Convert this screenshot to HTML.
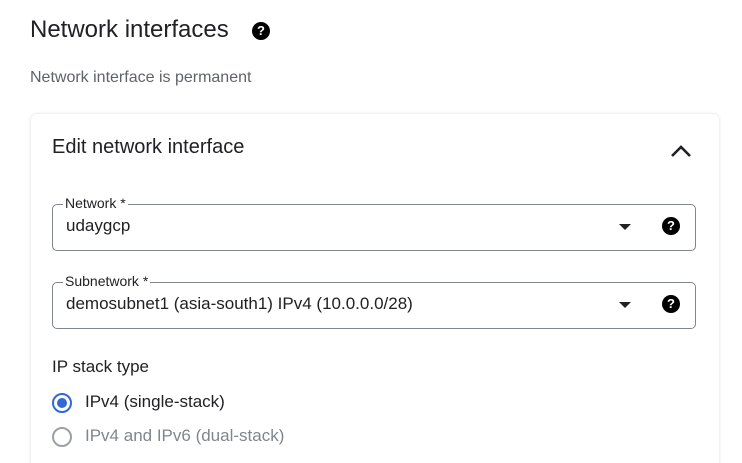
<!DOCTYPE html>
<html><head><style>
html,body{margin:0;width:742px;height:463px;overflow:hidden}
body{background:#fff;font-family:"Liberation Sans",sans-serif;position:relative;color:#202124}
.a{position:absolute;white-space:nowrap}
.card{position:absolute;left:31px;top:114px;width:688px;height:360px;border-radius:6px;box-shadow:0 0 3px rgba(0,0,0,.15);background:#fff}
.box{position:absolute;left:52px;width:642px;height:45px;border:1px solid #80868b;border-radius:5px}
.lbl{position:absolute;left:10px;top:-10px;background:#fff;padding:0 2px;font-size:14px;color:#202124}
.val{position:absolute;left:13px;top:11px;font-size:17px}
.tri{position:absolute;left:566px;top:19px;width:0;height:0;border-left:6px solid transparent;border-right:6px solid transparent;border-top:6px solid #202124}
.q{position:absolute;width:18px;height:18px;border-radius:50%;background:#000;color:#fff;font-weight:bold;font-size:13px;text-align:center;line-height:18px}
</style></head><body>
<div class="a" style="left:30px;top:16px;font-size:24px;color:#202124">Network interfaces</div>
<div class="q" style="left:252px;top:22px">?</div>
<div class="a" style="left:30px;top:69px;font-size:16px;color:#5f6368">Network interface is permanent</div>
<div class="card"></div>
<div class="a" style="left:52px;top:136px;font-size:20px;font-weight:500">Edit network interface</div>
<svg class="a" style="left:670px;top:143px" width="22" height="16"><path d="M2 13 L11 4 L20 13" fill="none" stroke="#202124" stroke-width="2.6"/></svg>
<div class="box" style="top:204px"><div class="lbl">Network *</div><div class="val">udaygcp</div><div class="tri"></div><div class="q" style="left:609px;top:12px">?</div></div>
<div class="box" style="top:282px"><div class="lbl">Subnetwork *</div><div class="val">demosubnet1 (asia-south1) IPv4 (10.0.0.0/28)</div><div class="tri"></div><div class="q" style="left:609px;top:12px">?</div></div>
<div class="a" style="left:52px;top:357px;font-size:17px">IP stack type</div>
<div class="a" style="left:52px;top:393px;width:16px;height:16px;border:2px solid #3367d6;border-radius:50%"></div>
<div class="a" style="left:57px;top:398px;width:10px;height:10px;background:#3367d6;border-radius:50%"></div>
<div class="a" style="left:85px;top:392px;font-size:17px">IPv4 (single-stack)</div>
<div class="a" style="left:52px;top:427px;width:16px;height:16px;border:2px solid #9aa0a6;border-radius:50%"></div>
<div class="a" style="left:85px;top:426px;font-size:17px;color:#80868b">IPv4 and IPv6 (dual-stack)</div>
</body></html>
